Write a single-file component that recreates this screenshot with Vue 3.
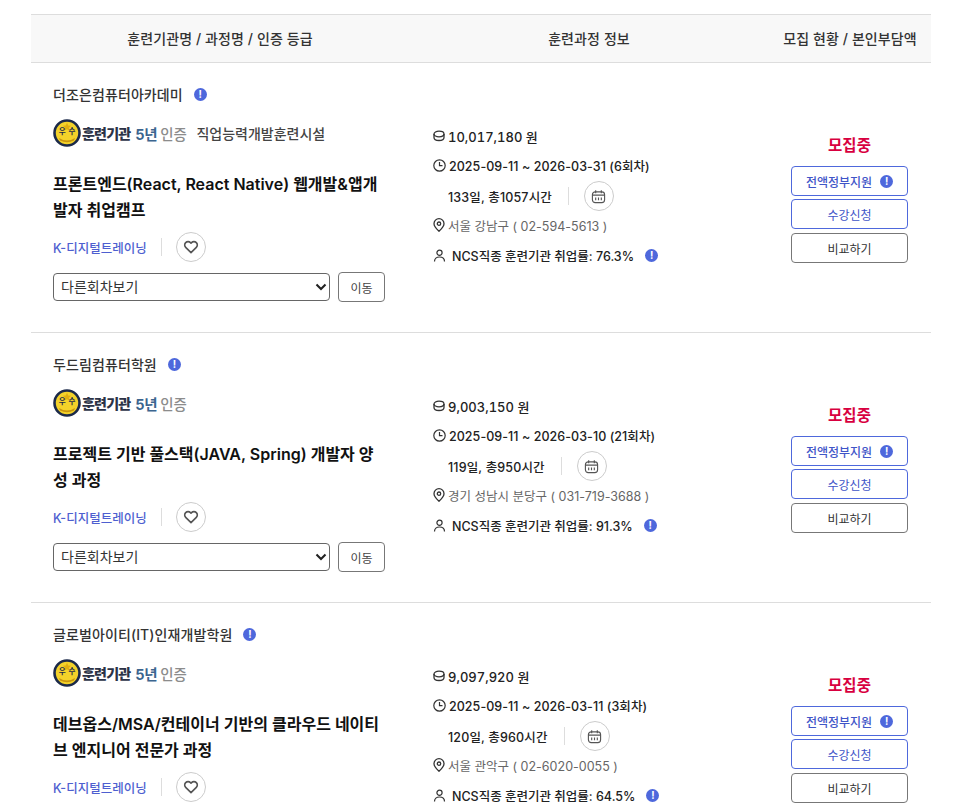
<script setup>
const rows = [
  { org: '더조은컴퓨터아카데미', facility: '직업능력개발훈련시설', title: '프론트엔드(React, React Native) 웹개발&앱개발자 취업캠프', price: '10,017,180 원', date: '2025-09-11 ~ 2026-03-31 (6회차)', time: '133일, 총1057시간', addr: '서울 강남구 ( 02-594-5613 )', rate: '76.3%' },
  { org: '두드림컴퓨터학원', facility: '', title: '프로젝트 기반 풀스택(JAVA, Spring) 개발자 양성 과정', price: '9,003,150 원', date: '2025-09-11 ~ 2026-03-10 (21회차)', time: '119일, 총950시간', addr: '경기 성남시 분당구 ( 031-719-3688 )', rate: '91.3%' },
  { org: '글로벌아이티(IT)인재개발학원', facility: '', title: '데브옵스/MSA/컨테이너 기반의 클라우드 네이티브 엔지니어 전문가 과정', price: '9,097,920 원', date: '2025-09-11 ~ 2026-03-11 (3회차)', time: '120일, 총960시간', addr: '서울 관악구 ( 02-6020-0055 )', rate: '64.5%' },
]
</script>

<template>
  <div class="page">
    <div class="thead">
      <div class="c1 th">훈련기관명 / 과정명 / 인증 등급</div>
      <div class="c2 th shift">훈련과정 정보</div>
      <div class="c3 th shift">모집 현황 / 본인부담액</div>
    </div>
    <div v-for="r in rows" :key="r.org" class="row">
      <div class="c1 left">
        <div class="org"><span>{{ r.org }}</span><i class="info">!</i></div>
        <div class="cert">
          <svg class="medal" width="28" height="28" viewBox="0 0 28 28">
            <circle cx="14" cy="14" r="12.500" fill="#f3d22a" stroke="#1c2a4a" stroke-width="2.600" />
            <path d="M14 3.800l1.200 2.800 3 .2-2.300 2 .8 3L14 10.200l-2.700 1.600.8-3-2.300-2 3-.2z" fill="#e0ad12" />
            <path d="M6 19q8 5 16 0l-1 2.500q-7 3.500-14 0z" fill="#c9960f" />
          </svg>
          <span class="medal-text">우 수</span>
          <b class="cert-name">훈련기관</b>
          <span class="cert-year">5년</span>
          <span class="cert-ok">인증</span>
          <span v-if="r.facility" class="facility">{{ r.facility }}</span>
        </div>
        <div class="title">{{ r.title }}</div>
        <div class="tag-row">
          <span class="tag">K-디지털트레이닝</span>
          <span class="vline"></span>
          <span class="round">
            <svg width="16" height="16" viewBox="0 0 24 24" fill="none" stroke="#555" stroke-width="2.400" stroke-linejoin="round">
              <path d="M12 20.500 4 12.600a5.100 5.100 0 0 1 0-7.200 5 5 0 0 1 7.200 0l.8.8.8-.8a5 5 0 0 1 7.200 0 5.100 5.100 0 0 1 0 7.200z" />
            </svg>
          </span>
        </div>
        <div class="move-row">
          <div class="sel-wrap">
            <select class="sel"><option>다른회차보기</option></select>
            <svg class="chev" width="12" height="8" viewBox="0 0 12 8" fill="none" stroke="#222" stroke-width="2.100">
              <path d="M1.500 1.500 6 6l4.500-4.500" />
            </svg>
          </div>
          <button class="move">이동</button>
        </div>
      </div>
      <div class="c2 mid">
        <div class="line strong price">
          <svg class="ic" width="12" height="12" viewBox="0 0 12 12" fill="none" stroke="#333" stroke-width="1.300">
            <ellipse cx="6" cy="4" rx="5" ry="2.800" /><path d="M1 4v3.500C1 9.300 3.200 10.500 6 10.500s5-1.200 5-3V4" />
          </svg>
          <span>{{ r.price }}</span>
        </div>
        <div class="line strong sm date">
          <svg class="ic" width="13" height="13" viewBox="0 0 13 13" fill="none" stroke="#333" stroke-width="1.200">
            <circle cx="6.500" cy="6.500" r="5.700" /><path d="M6.500 3v3.700h3" />
          </svg>
          <span>{{ r.date }}</span>
        </div>
        <div class="line strong sm timeline">
          <span>{{ r.time }}</span>
          <span class="vline"></span>
          <span class="round">
            <svg width="15" height="15" viewBox="0 0 16 16" fill="none" stroke="#555" stroke-width="1.200">
              <rect x="1.500" y="3" width="13" height="11.500" rx="3" /><path d="M5 1.200v3.200M11 1.200v3.200M2 6.500h12M5 9v3M8 9v3M11 9v3" />
            </svg>
          </span>
        </div>
        <div class="line addr">
          <svg class="ic" width="12" height="14" viewBox="0 0 12 14" fill="none" stroke="#333" stroke-width="1.300">
            <path d="M6 13.200C3 10.400 1 8.200 1 5.700a5 5 0 0 1 10 0c0 2.500-2 4.700-5 7.500z" /><circle cx="6" cy="5.700" r="1.700" />
          </svg>
          <span>{{ r.addr }}</span>
        </div>
        <div class="line strong sm rate">
          <svg class="ic user" width="13" height="13" viewBox="0 0 13 13" fill="none" stroke="#333" stroke-width="1.200">
            <circle cx="6.500" cy="3.800" r="2.600" /><path d="M1.500 12.500c0-3 2-4.500 5-4.500s5 1.500 5 4.500" />
          </svg>
          <span>NCS직종 훈련기관 취업률: {{ r.rate }}</span>
          <i class="info">!</i>
        </div>
      </div>
      <div class="c3 right">
        <div class="status">모집중</div>
        <button class="btn blue strongb">전액정부지원<i class="info">!</i></button>
        <button class="btn blue">수강신청</button>
        <button class="btn gray">비교하기</button>
      </div>
    </div>
  </div>
</template>

<style scoped>
.page {
  width: 900px;
  margin-left: 31px;
  padding-top: 14px;
  font-family: Inter, "Noto Sans CJK KR", "Noto Sans", sans-serif;
  color: #222;
}
.thead {
  display: flex;
  height: 47px;
  align-items: center;
  background: #f8f8f8;
  border-top: 1px solid #ddd;
  border-bottom: 1px solid #ddd;
}
.c1 { width: 378px; flex: none; }
.c2 { width: 362px; flex: none; }
.c3 { width: 160px; flex: none; }
.th { text-align: center; font-size: 14px; font-weight: 500; color: #333; margin-top: -2px; letter-spacing: 0.100px; box-sizing: border-box; }
.shift { padding-right: 2px; }
.row {
  display: flex;
  height: 269px;
  border-bottom: 1px solid #ddd;
}
.left { padding: 21px 0 0 22px; box-sizing: border-box; }
.org { display: flex; align-items: center; gap: 11px; height: 20px; font-size: 14px; letter-spacing: 0.100px; color: #333; font-weight: 500; }
.info {
  display: inline-flex;
  justify-content: center;
  align-items: center;
  width: 13px;
  height: 13px;
  border-radius: 50%;
  background: #4e68dc;
  color: #fff;
  font-size: 10px;
  font-weight: 700;
  font-style: normal;
  line-height: 1;
  letter-spacing: 0;
}
.cert { position: relative; display: flex; align-items: center; height: 28px; margin-top: 15px; }
.medal { flex: none; }
.medal-text { position: absolute; left: 2px; width: 24px; top: 7px; text-align: center; font-size: 7.500px; font-weight: 700; line-height: 12px; word-spacing: 1px; color: #1c2a4a; white-space: nowrap; }
.cert-name { margin-left: 1px; font-size: 14px; font-weight: 900; color: #2b3246; letter-spacing: -0.800px; }
.cert-year { font-size: 14.500px; font-weight: 700; color: #3c658f; letter-spacing: -0.300px; margin-left: 5px; }
.cert-ok { margin-left: 3px; font-size: 14.500px; font-weight: 500; color: #8c8c8c; letter-spacing: -0.300px; }
.facility { margin-left: 10px; font-size: 14px; font-weight: 500; color: #444; }
.title { margin-top: 24px; width: 332px; font-size: 16px; line-height: 26px; font-weight: 600; color: #111; word-break: break-all; }
.tag-row { display: flex; align-items: center; margin-top: 9px; height: 30px; }
.tag { font-size: 12.500px; font-weight: 500; color: #4e5fd0; }
.vline { width: 1px; height: 18px; background: #ddd; margin: 0 14px; }
.round {
  display: flex;
  justify-content: center;
  align-items: center;
  width: 30px;
  height: 30px;
  box-sizing: border-box;
  border: 1px solid #ccc;
  border-radius: 50%;
}
.move-row { display: flex; align-items: center; gap: 8px; margin-top: 10px; }
.sel-wrap { position: relative; display: flex; }
.chev { position: absolute; right: 3px; top: 10px; pointer-events: none; }
.sel {
  appearance: none;
  width: 277px;
  height: 28px;
  padding: 0 20px 2px 7px;
  border: 1px solid #666;
  border-radius: 4px;
  background: #fff;
  font: 400 14px Inter, "Noto Sans CJK KR", sans-serif;
  color: #333;
}
.move {
  width: 47px;
  height: 30px;
  padding: 0;
  border: 1px solid #777;
  border-radius: 4px;
  background: #fff;
  font: 400 12px Inter, "Noto Sans CJK KR", sans-serif;
  color: #444;
}
.mid { padding: 63px 0 0 24px; box-sizing: border-box; }
.line { display: flex; align-items: center; height: 20px; }
.line + .line { margin-top: 9px; }
.ic { flex: none; margin-right: 3px; }
.strong { font-size: 13px; font-weight: 500; color: #222; }
.price { font-variant-numeric: tabular-nums; }
.sm { font-size: 12.500px; }
.date { letter-spacing: 0.050px; }
.timeline { height: 30px; padding-left: 15px; margin-top: 6px !important; letter-spacing: 0.150px; }
.timeline .vline { margin: 0 15px 0 16px; }
.addr { font-size: 12.500px; color: #666; margin-top: 4px !important; }
.rate { margin-top: 10px !important; }
.rate .user { margin-right: 6px; }
.rate .info { margin-left: 11px; }
.right { display: flex; flex-direction: column; align-items: center; padding: 72px 3px 0 0; box-sizing: border-box; }
.status { height: 22px; line-height: 22px; margin-bottom: 9px; font-size: 15.500px; font-weight: 700; color: #d8003f; }
.btn {
  display: flex;
  justify-content: center;
  align-items: center;
  gap: 8px;
  width: 117px;
  height: 30px;
  flex: none;
  padding: 0;
  margin-bottom: 3px;
  border-radius: 4px;
  background: #fff;
  font: 400 12px Inter, "Noto Sans CJK KR", sans-serif;
}
.blue { border: 1px solid #4e68dc; color: #3f55c8; }
.gray { border: 1px solid #777; color: #333; margin-top: 1px; }
.strongb { font-weight: 500; }
</style>

<style>
html, body { overflow: hidden; background: #fff; }
</style>
